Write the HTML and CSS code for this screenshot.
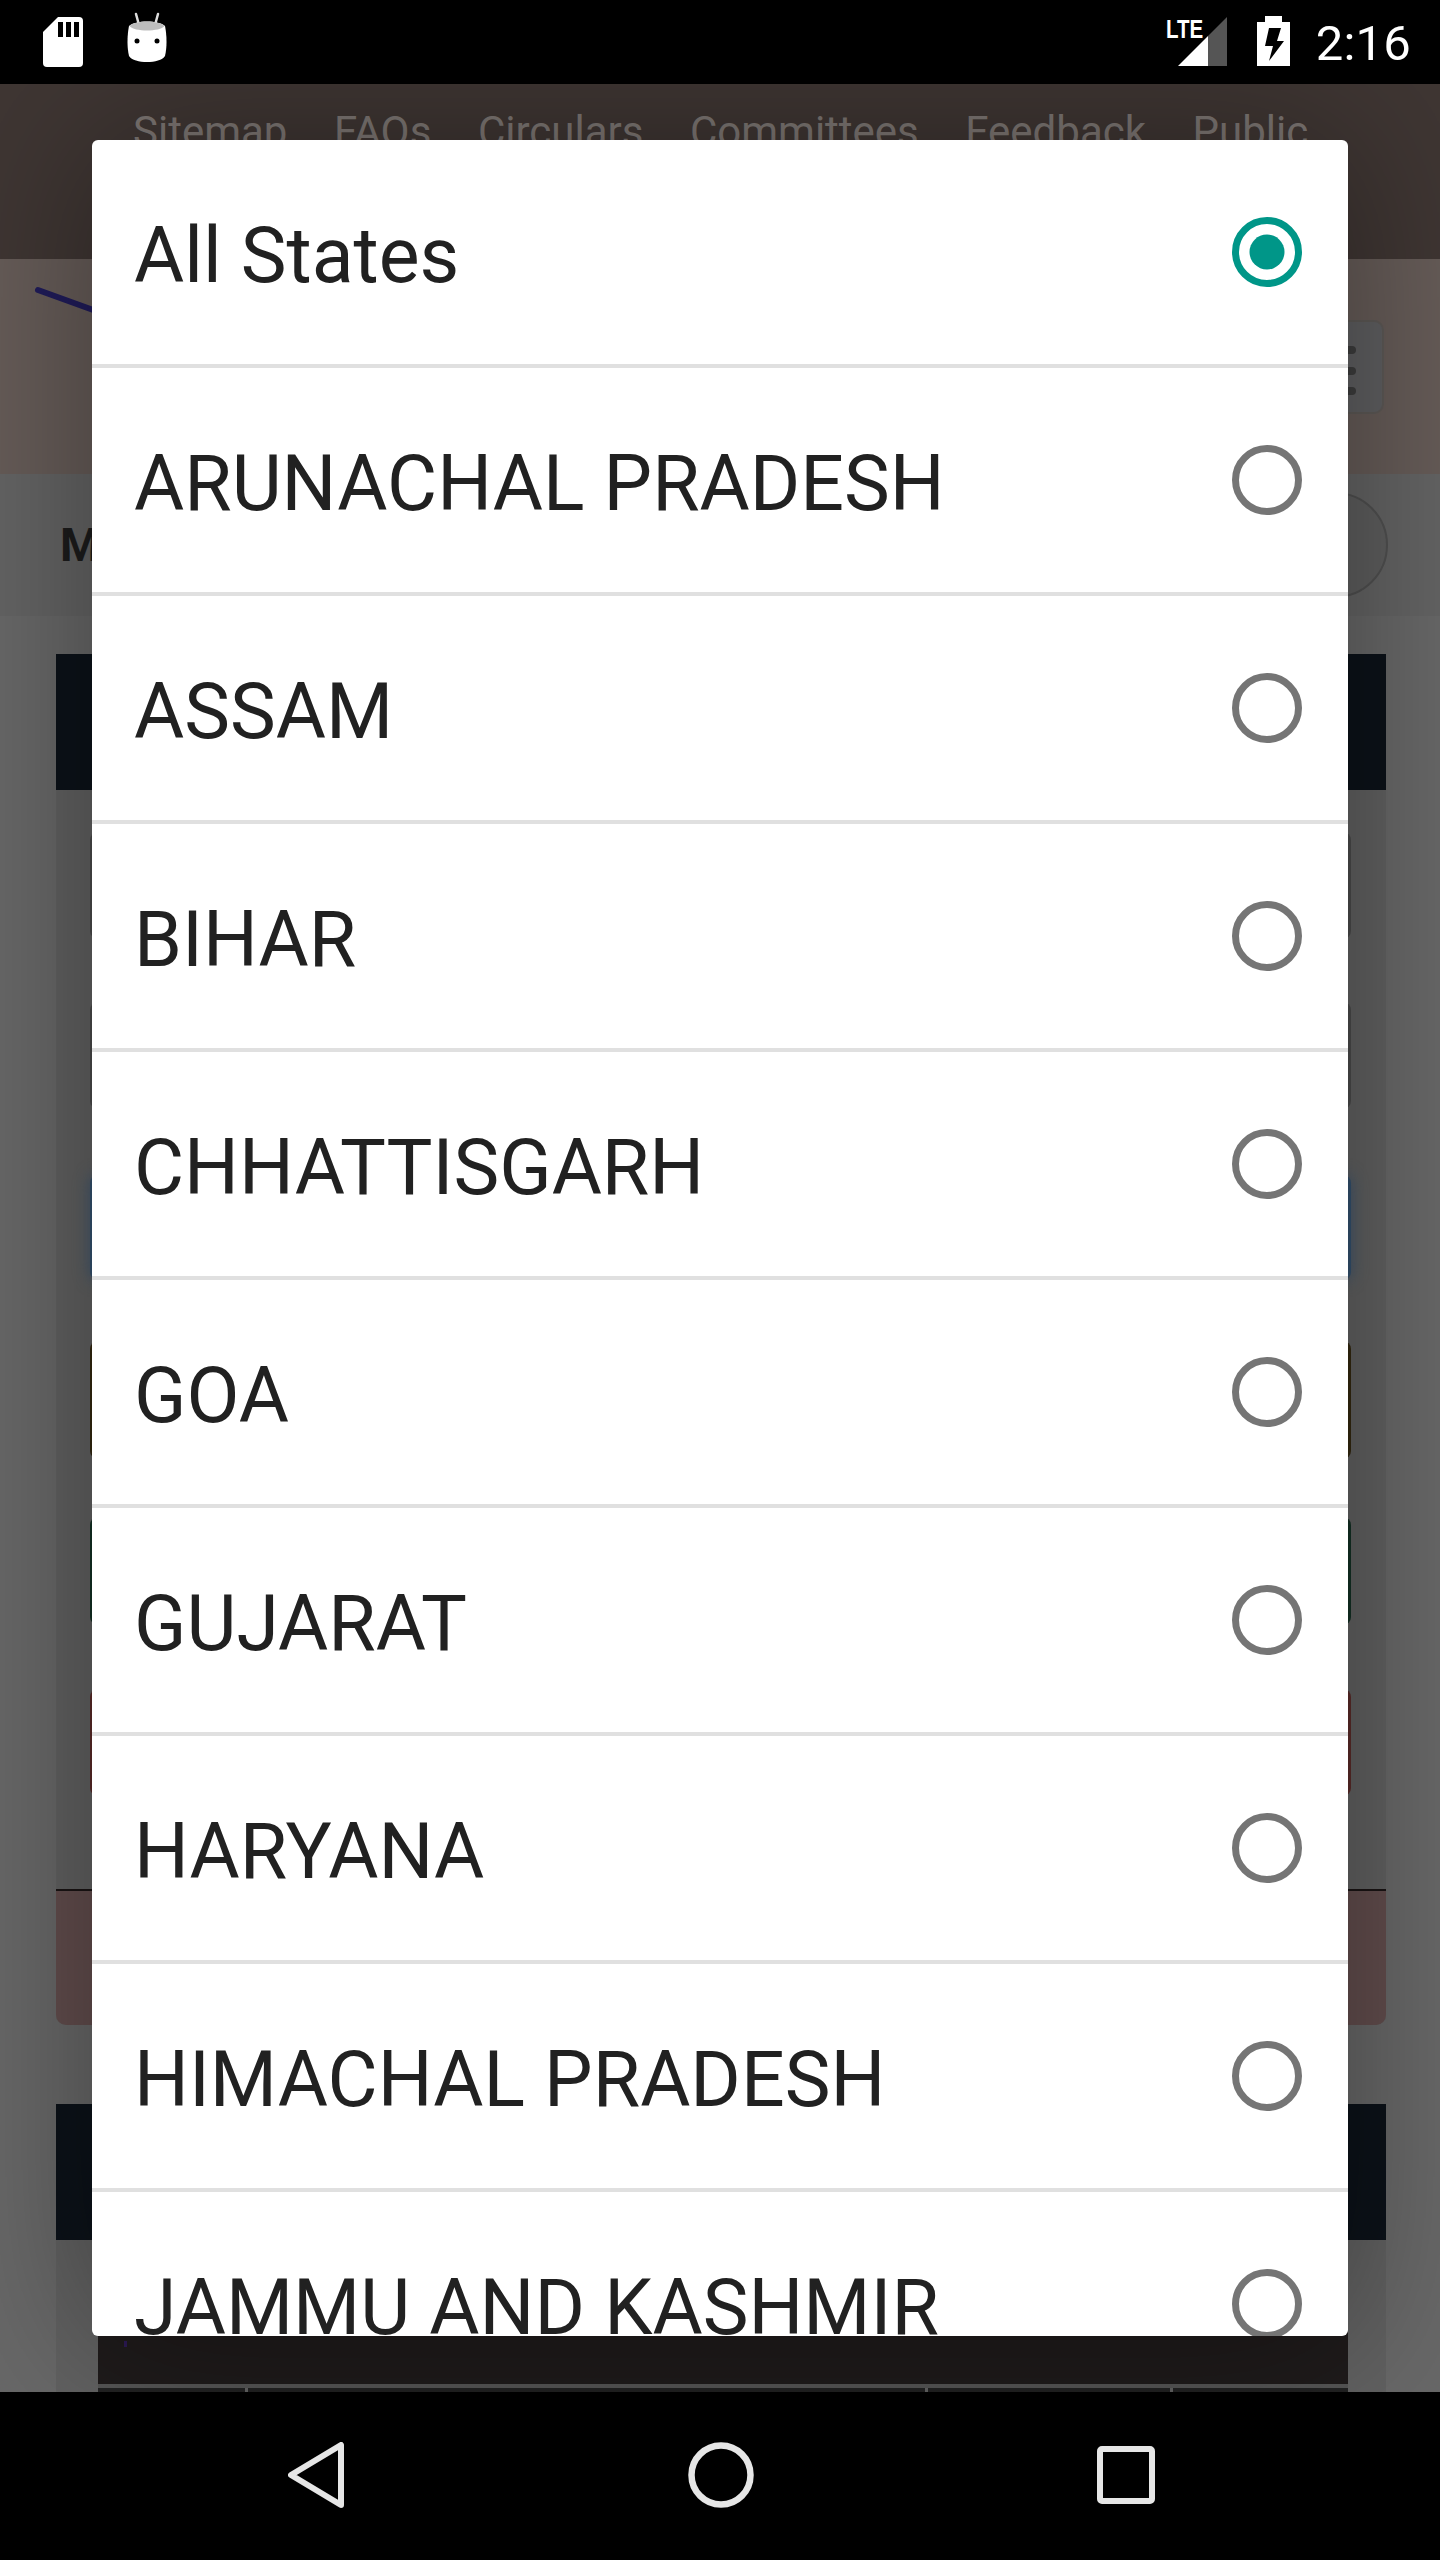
FILE: index.html
```html
<!DOCTYPE html>
<html lang="en">
<head>
<meta charset="utf-8">
<title>All States</title>
<link rel="stylesheet" href="styles.css">
</head>
<body>
<div class="phone">
  <header class="status">
    <div class="status-left">
      <svg class="ic-sd" viewBox="0 0 40 50"><path fill="#fff" d="M15 0H36a4 4 0 0 1 4 4V46a4 4 0 0 1-4 4H4a4 4 0 0 1-4-4V15Z"/><path fill="#000" d="M15 5h5v15h-5zM23 5h5v15h-5zM31 5h5v15h-5z"/></svg>
      <svg class="ic-droid" viewBox="0 0 40 52"><path stroke="#ddd" stroke-width="2.5" stroke-linecap="round" d="M9 2l3 11M31 2l-3 11"/><path fill="#fff" d="M2 14C8 8 32 8 38 14C40 24 40 36 38 44C33 52 7 52 2 44C0 36 0 24 2 14Z"/><path fill="#bdbdbd" d="M2.500 14C8 8 32 8 37.500 14C33 20 7 20 2.500 14Z"/><circle cx="10" cy="29" r="2.500"/><circle cx="30" cy="29" r="2.500"/></svg>
    </div>
    <div class="status-right">
      <div class="signal">
        <span class="lte">LTE</span>
        <svg class="ic-signal" viewBox="0 0 49 49"><path fill="#fff" d="M0 49H30V19Z"/><path fill="#555" d="M30 49H49V0L30 19Z"/></svg>
      </div>
      <svg class="ic-battery" viewBox="0 0 33 50"><path fill="#fff" d="M8 0H25V6H33V50H0V6H8Z"/><path fill="#000" d="M12 12H24L20 25H27L12 45L16 30H8Z"/></svg>
      <span class="clock">2:16</span>
    </div>
  </header>

  <main class="page">
    <nav class="toplinks">
      <a>Sitemap</a><a>FAQs</a><a>Circulars</a><a>Committees</a><a>Feedback</a><a>Public</a>
    </nav>
    <div class="hero">
      <svg class="logo" viewBox="0 0 60 30"><path d="M2 2L60 23" stroke="#201c5a" stroke-width="6" stroke-linecap="round" fill="none"/></svg>
      <div class="toggle"><i></i><i></i><i></i></div>
    </div>
    <div class="titleband">
      <strong class="pagetitle">M</strong>
      <span class="roundbtn"></span>
    </div>
    <section class="panel">
      <div class="panel-head"></div>
      <div class="panel-body">
        <div class="btn b1"></div>
        <div class="btn b2"></div>
        <div class="btn b3"></div>
        <div class="btn b4"></div>
        <div class="btn b5"></div>
        <div class="btn b6"></div>
      </div>
      <div class="panel-foot"></div>
    </section>
    <section class="panel second">
      <div class="panel-head"></div>
      <div class="panel-body2">
        <div class="thead"><i class="speck"></i></div>
        <div class="tbody"><span class="c1"></span><span class="c2"></span><span class="c3"></span><span class="c4"></span></div>
      </div>
    </section>
  </main>

  <footer class="navbar">
    <svg class="ic-back" viewBox="0 0 56 66"><path d="M53 3V63L3 33Z" fill="none" stroke="#e6e6e6" stroke-width="6" stroke-linejoin="round"/></svg>
    <svg class="ic-home" viewBox="0 0 66 66"><circle cx="33" cy="33" r="29.500" fill="none" stroke="#e6e6e6" stroke-width="6.500"/></svg>
    <svg class="ic-recent" viewBox="0 0 58 58"><rect x="3" y="3" width="52" height="52" rx="2" fill="none" stroke="#e6e6e6" stroke-width="6"/></svg>
  </footer>

  <div class="dialog">
    <div class="row"><span>All States</span><svg class="radio on" viewBox="0 0 70 70"><circle cx="35" cy="35" r="31.500"/><circle class="dot" cx="35" cy="35" r="17.500"/></svg></div>
    <div class="row"><span>ARUNACHAL PRADESH</span><svg class="radio" viewBox="0 0 70 70"><circle cx="35" cy="35" r="31.500"/></svg></div>
    <div class="row"><span>ASSAM</span><svg class="radio" viewBox="0 0 70 70"><circle cx="35" cy="35" r="31.500"/></svg></div>
    <div class="row"><span>BIHAR</span><svg class="radio" viewBox="0 0 70 70"><circle cx="35" cy="35" r="31.500"/></svg></div>
    <div class="row"><span>CHHATTISGARH</span><svg class="radio" viewBox="0 0 70 70"><circle cx="35" cy="35" r="31.500"/></svg></div>
    <div class="row"><span>GOA</span><svg class="radio" viewBox="0 0 70 70"><circle cx="35" cy="35" r="31.500"/></svg></div>
    <div class="row"><span>GUJARAT</span><svg class="radio" viewBox="0 0 70 70"><circle cx="35" cy="35" r="31.500"/></svg></div>
    <div class="row"><span>HARYANA</span><svg class="radio" viewBox="0 0 70 70"><circle cx="35" cy="35" r="31.500"/></svg></div>
    <div class="row"><span>HIMACHAL PRADESH</span><svg class="radio" viewBox="0 0 70 70"><circle cx="35" cy="35" r="31.500"/></svg></div>
    <div class="row"><span>JAMMU AND KASHMIR</span><svg class="radio" viewBox="0 0 70 70"><circle cx="35" cy="35" r="31.500"/></svg></div>
  </div>
</div>
</body>
</html>
```
FILE: styles.css
```css
* { box-sizing: border-box; }
html, body { margin: 0; padding: 0; background: #000; }
body { font-family: Roboto, "Noto Sans", sans-serif; }
.phone { position: relative; width: 1440px; height: 2560px; display: flex; flex-direction: column; overflow: hidden; }

.status { height: 84px; flex: none; background: #000; display: flex; justify-content: space-between; position: relative; z-index: 2; }
.status-left { display: flex; padding: 17px 0 0 43px; gap: 44px; }
.ic-sd { width: 40px; height: 50px; display: block; }
.ic-droid { width: 40px; height: 52px; display: block; margin-top: -5px; }
.status-right { display: flex; padding-right: 29px; }
.signal { position: relative; width: 49px; margin-top: 17px; margin-right: 30px; }
.ic-signal { width: 49px; height: 49px; display: block; }
.lte { position: absolute; left: -12px; top: 0; color: #fff; font: 700 25px/25px "Liberation Sans Narrow", "Liberation Sans", sans-serif; transform: scaleX(.82); transform-origin: 0 0; }
.ic-battery { width: 33px; height: 50px; margin-top: 16px; display: block; }
.clock { color: #fff; font-size: 49px; line-height: 48px; margin: 20px 0 0 26px; letter-spacing: .2px; }

.page { flex: 1; min-height: 0; overflow: hidden; background: #686868; }
.toplinks { height: 175px; background: #3f3633; display: flex; padding: 23px 0 0 133px; gap: 46.500px; color: #7d7673; font-size: 42px; line-height: 50px; }
.hero { height: 215px; background: #665c58; display: flex; justify-content: space-between; align-items: flex-start; padding: 29px 56px 0 36px; }
.logo { width: 60px; height: 30px; display: block; overflow: visible; }
.toggle { width: 114px; height: 94px; margin-top: 32px; border: 2px solid #5d5956; background: #5f5f61; border-radius: 10px; display: flex; flex-direction: column; align-items: center; gap: 12.500px; padding-top: 24px; }
.toggle i { width: 58px; height: 8px; background: #3d3d3d; border-radius: 4px; display: block; }
.titleband { height: 142px; background: #646464; display: flex; justify-content: space-between; align-items: center; padding: 0 52px 0 60px; }
.pagetitle { color: #1c1c1c; font-size: 46px; font-weight: 700; }
.roundbtn { width: 106px; height: 106px; border-radius: 50%; border: 2px solid #505050; background: #5e5e5e; }

.panel { margin: 38px 54px 0 56px; background: #616161; border-radius: 0 0 10px 10px; }
.panel.second { margin-top: 79px; height: 400px; }
.panel-head { height: 136px; background: #0c1219; }
.panel-body { height: 1101px; padding: 42px 35px 0 34px; border-bottom: 2px solid #1a1414; }
.btn { height: 107px; border-radius: 8px; }
.b1 { background: #4a4a4a; }
.b2 { background: #4a4a4a; margin-top: 63px; }
.b3 { background: #33506e; margin-top: 66px; height: 105px; box-shadow: 0 0 16px #3d5670; }
.b4 { background: #33280f; margin-top: 61px; height: 118px; }
.b5 { background: #133024; margin-top: 58px; height: 108px; }
.b6 { background: #5a2a28; margin-top: 64px; }
.panel-foot { height: 134px; background: #624d4d; border-radius: 0 0 10px 10px; }
.panel-body2 { padding: 0 38px 0 42px; }
.thead { height: 144px; background: #1f1b1b; position: relative; }
.speck { position: absolute; left: 26px; top: 101px; width: 3px; height: 6px; background: #2d1a55; }
.tbody { border-top: 4px solid #555; height: 60px; display: flex; gap: 3px; }
.tbody span { background: #222; }
.c1 { width: 147px; }
.c2 { width: 677px; }
.c3 { width: 242px; }
.c4 { flex: 1; }

.navbar { height: 168px; flex: none; background: #000; display: flex; align-items: center; padding: 0 0 0 288px; position: relative; z-index: 2; }
.ic-back { width: 56px; height: 66px; display: block; margin-bottom: 2px; }
.ic-home { width: 66px; height: 66px; display: block; margin-left: 344px; margin-bottom: 2px; }
.ic-recent { width: 58px; height: 58px; display: block; margin-left: 343px; margin-bottom: 2px; }

.dialog { position: absolute; left: 92px; top: 140px; width: 1256px; height: 2196px; background: #fff; border-radius: 6px; overflow: hidden; box-shadow: 0 0 160px rgba(0,0,0,.38); }
.row { height: 228px; border-bottom: 4px solid #e0e0e0; display: flex; justify-content: space-between; align-items: center; padding: 0 46px 0 42px; color: #212121; font-size: 77px; }
.row span { padding-top: 8px; }
.radio { width: 70px; height: 70px; display: block; }
.radio circle { fill: none; stroke: #757575; stroke-width: 7; }
.radio.on circle { stroke: #009688; }
.radio.on .dot { fill: #009688; stroke: none; }
```
